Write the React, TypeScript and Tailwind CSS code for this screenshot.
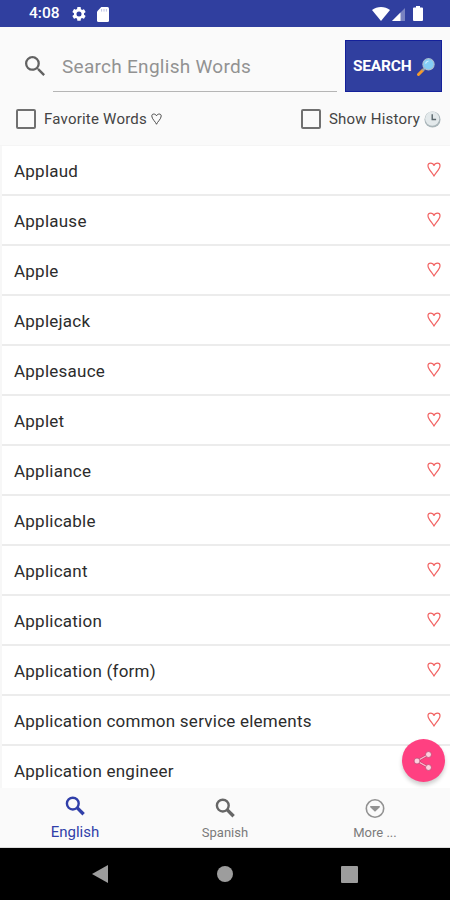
import { useState } from 'react';

const words = [
  'Applaud',
  'Applause',
  'Apple',
  'Applejack',
  'Applesauce',
  'Applet',
  'Appliance',
  'Applicable',
  'Applicant',
  'Application',
  'Application (form)',
  'Application common service elements',
  'Application engineer',
];

const HeartIcon = ({ className }: { className: string }) => (
  <svg viewBox="0 0 14 15" className={className} fill="none" stroke="currentColor" strokeLinejoin="round">
    <path
      d="M7 14.2C6.200 11.500 1 7.500 1 3.700 1 2 2.100 1.200 3.500 1.200 5 1.200 6.500 2 7 3.500 7.500 2 9 1.200 10.500 1.200 11.900 1.200 13 2 13 3.700 13 7.500 7.800 11.500 7 14.200Z"
      strokeWidth="1.200"
    />
  </svg>
);

const SearchIcon = ({ className }: { className: string }) => (
  <svg viewBox="3 3 17.5 17.5" className={className} fill="currentColor">
    <path d="M15.5 14h-.79l-.28-.27A6.471 6.471 0 0 0 16 9.5 6.5 6.5 0 1 0 9.5 16c1.61 0 3.09-.59 4.23-1.57l.27.28v.79l5 4.99L20.49 19l-4.99-5zm-6 0C7.01 14 5 11.99 5 9.5S7.01 5 9.5 5 14 7.01 14 9.5 11.99 14 9.5 14z" />
  </svg>
);

const BoldSearchIcon = () => (
  <svg viewBox="0 0 20 20" className="h-5 w-5" fill="none" stroke="currentColor">
    <circle cx="7.8" cy="7.6" r="5.9" strokeWidth="2.4" />
    <path d="M11.8 11.4L18.6 18.2" strokeWidth="3.4" />
  </svg>
);

const StatusBar = () => (
  <div className="flex h-[27px] shrink-0 items-center bg-[#303f9f] pr-[27px] pl-[29px] text-white">
    <span className="w-[43px] pt-px text-[15.5px] font-medium">4:08</span>
    <svg viewBox="2 2 20 20" className="mt-px h-[14px] w-[14px]" fill="currentColor">
      <path d="M19.14 12.94c.04-.3.06-.61.06-.94s-.02-.64-.07-.94l2.03-1.58a.49.49 0 0 0 .12-.61l-1.92-3.32a.49.49 0 0 0-.59-.22l-2.39.96a7 7 0 0 0-1.62-.94l-.36-2.54A.48.48 0 0 0 13.92 2h-3.84a.48.48 0 0 0-.48.41l-.36 2.54c-.59.24-1.13.57-1.62.94l-2.39-.96a.48.48 0 0 0-.59.22L2.73 8.87a.48.48 0 0 0 .12.61l2.03 1.58c-.05.3-.09.63-.09.94s.02.64.07.94l-2.03 1.58a.49.49 0 0 0-.12.61l1.92 3.32c.12.22.37.29.59.22l2.39-.96c.5.38 1.03.7 1.62.94l.36 2.54c.05.24.24.41.48.41h3.84c.24 0 .44-.17.47-.41l.36-2.54a7 7 0 0 0 1.62-.94l2.39.96c.22.08.47 0 .59-.22l1.92-3.32a.48.48 0 0 0-.12-.61zM12 15.6A3.6 3.6 0 1 1 12 8.4a3.6 3.6 0 0 1 0 7.2z" />
    </svg>
    <svg viewBox="0 0 12 15" className="mt-px ml-[11px] h-[15px] w-[12px]" fill="currentColor">
      <path d="M4.3 0H10.5A1.5 1.5 0 0 1 12 1.500V13.500A1.5 1.5 0 0 1 10.5 15H1.500A1.5 1.5 0 0 1 0 13.500V4.500Z" />
      <path d="M4.600 2V4.600M7 2V4.600M9.400 2V4.600" stroke="#b5bbe0" strokeWidth="0.9" />
    </svg>
    <svg viewBox="0 0 18 14" className="ml-auto h-[14px] w-[18px]" fill="currentColor">
      <path d="M9 14L0 3.100C5 -0.900 13 -0.900 18 3.100Z" />
    </svg>
    <svg viewBox="0 0 13 13" className="mt-0.5 ml-0.5 h-[13px] w-[13px]" fill="currentColor">
      <path d="M13 0V13H0Z" fillOpacity="0.35" />
      <path d="M8.500 4.500V13H0Z" />
    </svg>
    <svg viewBox="0 0 10 15" className="ml-2 h-[15px] w-[10px]" fill="currentColor">
      <path d="M3 0H7V1.600H9A1 1 0 0 1 10 2.600V14A1 1 0 0 1 9 15H1A1 1 0 0 1 0 14V2.600A1 1 0 0 1 1 1.600H3Z" />
    </svg>
  </div>
);

const Checkbox = ({ checked, onChange }: { checked: boolean; onChange: () => void }) => (
  <input
    type="checkbox"
    checked={checked}
    onChange={onChange}
    className="h-5 w-5 appearance-none rounded-[2px] border-2 border-[#707070] checked:bg-[#ff4081]"
  />
);

const MagnifierEmoji = () => (
  <svg viewBox="0 0 18 18" className="ml-[5px] h-[18px] w-[18px] shrink-0">
    <path d="M1.500 16.500L6 12" stroke="#f39a2d" strokeWidth="3" strokeLinecap="round" />
    <path d="M5.500 12.500L7.500 10.500" stroke="#8aa0b5" strokeWidth="1.800" />
    <circle cx="11.500" cy="6.300" r="5.600" fill="#84cdf5" stroke="#a9bfd0" strokeWidth="1.200" />
    <path d="M8.500 5.500C9 4 10 3.200 11.500 3" stroke="#d5f0ff" strokeWidth="1.200" fill="none" />
  </svg>
);

const ClockEmoji = () => (
  <svg viewBox="0 0 18 18" className="ml-1 h-[17px] w-[17px]">
    <circle cx="9" cy="9" r="8.500" fill="#a9b5b9" />
    <circle cx="8.700" cy="8.100" r="7.500" fill="#e3e9eb" />
    <path d="M8.700 3.500V9H12.800" stroke="#5b686e" strokeWidth="1.500" fill="none" />
  </svg>
);

const App = () => {
  const [query, setQuery] = useState('');
  const [favoritesOnly, setFavoritesOnly] = useState(false);
  const [showHistory, setShowHistory] = useState(false);

  return (
    <div className="relative flex h-[900px] w-[450px] flex-col overflow-hidden bg-[#fafafa] font-['Roboto',sans-serif]">
      <StatusBar />

      <div className="flex h-[119px] shrink-0 flex-col border-b border-[#f5f5f5]">
        <div className="flex pt-[13px] pr-2 pl-[25px]">
          <SearchIcon className="mt-4 h-5 w-5 text-[#626262]" />
          <input
            value={query}
            onChange={(e) => setQuery(e.target.value)}
            placeholder="Search English Words"
            className="ml-2 h-[52px] w-[284px] border-b border-[#b5b5b5] pt-px pl-[9px] text-[19px] tracking-[0.28px] outline-none placeholder:text-[#929292]"
          />
          <button className="ml-2 flex h-[52px] w-[97px] items-center border border-[#14209a] bg-[#303f9f] pt-0.5 pl-[7px] text-[15.5px] font-bold tracking-[-0.2px] text-white">
            SEARCH
            <MagnifierEmoji />
          </button>
        </div>
        <div className="mt-[17px] flex justify-between pr-[9px] pl-4 text-[15px] tracking-[0.22px] text-[#444]">
          <label className="flex h-5 items-center gap-2">
            <Checkbox checked={favoritesOnly} onChange={() => setFavoritesOnly(!favoritesOnly)} />
            <span className="flex items-center">
              Favorite Words
              <HeartIcon className="ml-1 h-3 w-[11px] text-[#444]" />
            </span>
          </label>
          <label className="flex h-5 items-center">
            <Checkbox checked={showHistory} onChange={() => setShowHistory(!showHistory)} />
            <span className="ml-2">Show History</span>
            <ClockEmoji />
          </label>
        </div>
      </div>

      <ul className="h-[642px] shrink-0 overflow-hidden border-l-2 border-[#f7f7f7] bg-white">
        {words.map((word) => (
          <li
            key={word}
            className="flex h-[50px] items-center justify-between border-b-2 border-[#ececec] pt-[3px] pr-[9px] pl-3 text-[17px] tracking-[0.24px] text-[#2c2c2c]"
          >
            <span>{word}</span>
            <HeartIcon className="mb-1 h-[15px] w-[14px] text-[#f26363]" />
          </li>
        ))}
      </ul>

      <nav className="flex h-[60px] shrink-0 border-b border-[#dcdcdc] text-[13px] text-[#7b7b7b]">
        <button className="flex w-[150px] flex-col items-center pt-2 text-[15px] text-[#303fa9]">
          <BoldSearchIcon />
          <span className="mt-1.5 leading-5">English</span>
        </button>
        <button className="flex w-[150px] flex-col items-center pt-2.5">
          <span className="text-[#666]">
            <BoldSearchIcon />
          </span>
          <span className="mt-[5px] leading-5">Spanish</span>
        </button>
        <button className="flex w-[150px] flex-col items-center pt-2.5">
          <svg viewBox="0 0 20 20" className="h-5 w-5">
            <circle cx="10" cy="10.500" r="8.700" fill="none" stroke="#929292" strokeWidth="1.600" />
            <path d="M5.200 8H14.800V9.200L10 13.800L5.200 9.200Z" fill="#929292" />
          </svg>
          <span className="mt-[5px] leading-5">More ...</span>
        </button>
      </nav>

      <div className="flex h-[52px] shrink-0 items-center justify-center bg-black text-[#9d9d9d]">
        <svg viewBox="0 0 16 18" className="h-[18px] w-4" fill="currentColor">
          <path d="M16 0V18L0 9Z" />
        </svg>
        <div className="ml-[109px] h-4 w-4 rounded-full bg-[#9d9d9d]" />
        <div className="ml-[108px] h-[17px] w-[17px] rounded-[1px] bg-[#9d9d9d]" />
      </div>

      <button className="absolute top-[739px] left-[402px] flex h-[43px] w-[43px] items-center justify-center rounded-full bg-[#ff4081] shadow-[0_3px_4px_rgba(0,0,0,0.2)]">
        <svg viewBox="0 0 20 20" className="mr-0.5 h-5 w-5" fill="#ffd0df" stroke="#a83a63" strokeWidth="0.600">
          <path d="M15.500 3.500L4 10L15.500 16.500" fill="none" stroke="#c4446f" strokeWidth="2.400" />
          <path d="M15.500 3.500L4 10L15.500 16.500" fill="none" stroke="#ffb5cd" strokeWidth="1.300" />
          <circle cx="15.500" cy="3.500" r="2.900" />
          <circle cx="4" cy="10" r="2.900" />
          <circle cx="15.500" cy="16.500" r="2.900" />
        </svg>
      </button>
    </div>
  );
};

export default App;
